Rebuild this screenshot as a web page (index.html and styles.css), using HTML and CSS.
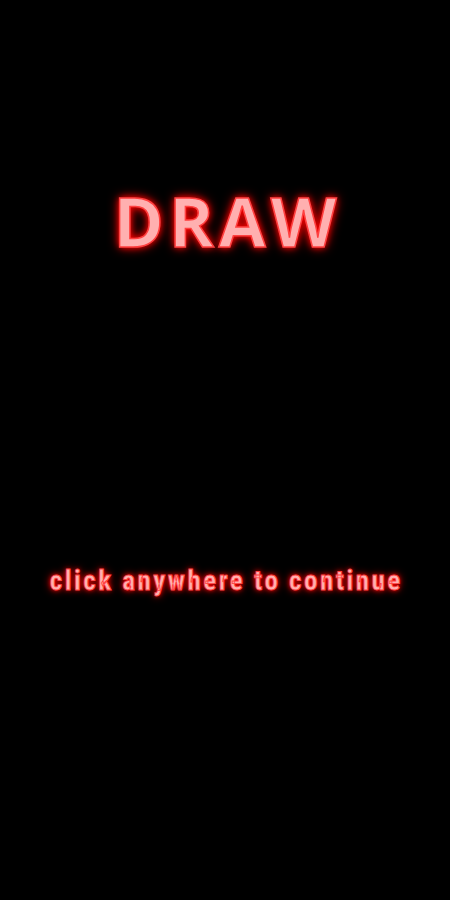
FILE: index.html
```html
<!DOCTYPE html>
<html>
<head>
<meta charset="utf-8">
<link rel="stylesheet" href="styles.css">
</head>
<body>
<div class="screen">
  <h1 class="title">DRAW</h1>
  <p class="hint">click anywhere to continue</p>
</div>
</body>
</html>
```
FILE: styles.css
```css
html, body { margin: 0; padding: 0; background: #000; }
.screen {
  width: 450px;
  height: 900px;
  display: flex;
  flex-direction: column;
  align-items: center;
}
.title {
  margin: 176px 0 0 0;
  font-family: "Open Sans", sans-serif;
  font-weight: 700;
  font-size: 68px;
  line-height: 90px;
  letter-spacing: 5px;
  padding-left: 5px;
  color: #ffb0b0;
  -webkit-text-stroke: 1.5px #ff4040;
  text-shadow: 0 0 6px #ff0000, 0 0 12px #ff0000;
}
.hint {
  margin: 299px 0 0 0;
  font-family: "Roboto Condensed", "DejaVu Sans", sans-serif;
  font-stretch: condensed;
  font-weight: 700;
  font-size: 27px;
  letter-spacing: 2.5px;
  padding-left: 2.5px;
  color: #ffb0b0;
  -webkit-text-stroke: 0.8px #ff4040;
  text-shadow: 0 0 4px #ff0000, 0 0 8px #ff0000;
}
```
